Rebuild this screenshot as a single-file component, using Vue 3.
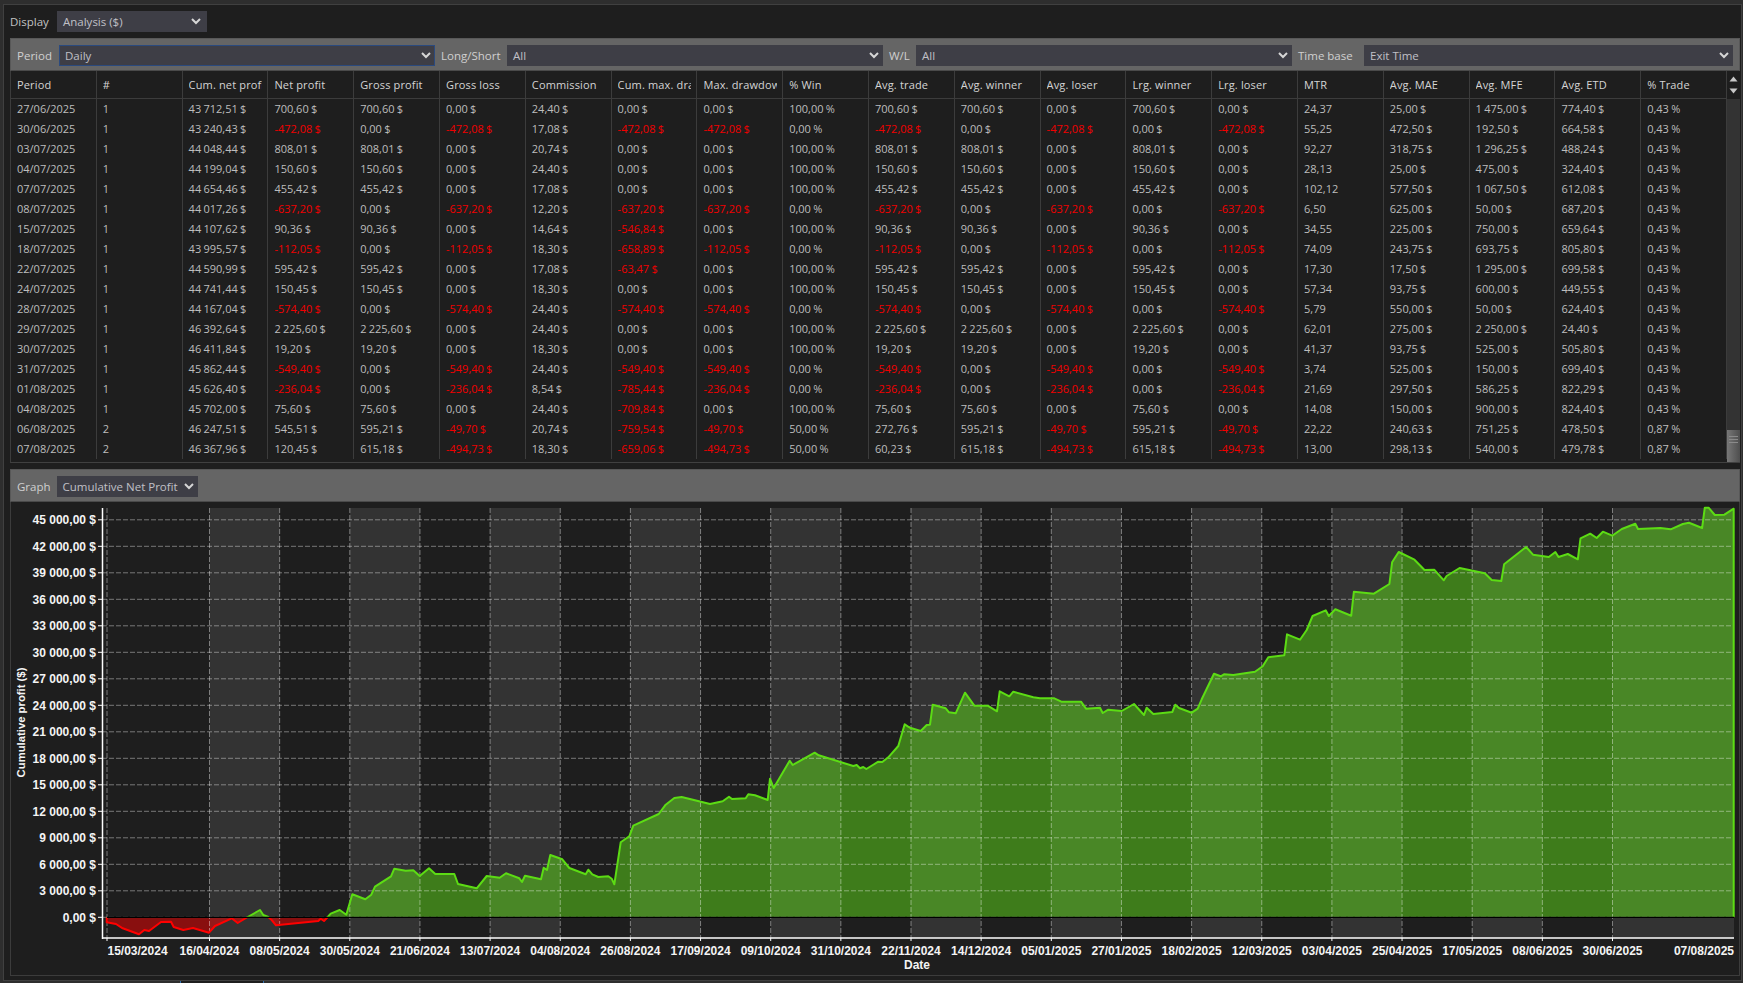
<template>
  <div class="page">
    <div class="frame">
      <div class="display-row">
        <span class="lbl display-lbl">Display</span>
        <div class="select display-select">
          <span>Analysis ($)</span>
          <svg class="chev" width="10" height="7" viewBox="0 0 10 7"><path d="M1 1 L5 5 L9 1" /></svg>
        </div>
      </div>

      <div class="toolbar filters">
        <span class="lbl">Period</span>
        <div class="select focused">
          <span>Daily</span>
          <svg class="chev" width="10" height="7" viewBox="0 0 10 7"><path d="M1 1 L5 5 L9 1" /></svg>
        </div>
        <span class="lbl">Long/Short</span>
        <div class="select">
          <span>All</span>
          <svg class="chev" width="10" height="7" viewBox="0 0 10 7"><path d="M1 1 L5 5 L9 1" /></svg>
        </div>
        <span class="lbl">W/L</span>
        <div class="select">
          <span>All</span>
          <svg class="chev" width="10" height="7" viewBox="0 0 10 7"><path d="M1 1 L5 5 L9 1" /></svg>
        </div>
        <span class="lbl">Time base</span>
        <div class="select">
          <span>Exit Time</span>
          <svg class="chev" width="10" height="7" viewBox="0 0 10 7"><path d="M1 1 L5 5 L9 1" /></svg>
        </div>
      </div>

      <div class="table-wrap">
        <div class="table">
          <div class="row head">
            <div v-for="c in columns" :key="c" class="cell">
              <div class="clip">{{ c }}</div>
            </div>
          </div>
          <div v-for="(r, i) in rows" :key="i" class="row">
            <div
              v-for="(v, j) in r"
              :key="j"
              class="cell"
              :class="{ neg: v.startsWith('-') }"
            >{{ v }}</div>
          </div>
        </div>
        <div class="scrollbar">
          <div class="scroll-btns">
            <svg width="9" height="6" viewBox="0 0 9 6"><path d="M4.5 0.5 L8.5 5.5 L0.5 5.5 Z" /></svg>
            <svg width="9" height="6" viewBox="0 0 9 6"><path d="M0.5 0.5 L8.5 0.5 L4.5 5.5 Z" /></svg>
          </div>
          <div class="track">
            <div class="thumb"><i></i><i></i><i></i></div>
          </div>
        </div>
      </div>

      <div class="toolbar graphbar">
        <span class="lbl">Graph</span>
        <div class="select graph-select">
          <span>Cumulative Net Profit</span>
          <svg class="chev" width="10" height="7" viewBox="0 0 10 7"><path d="M1 1 L5 5 L9 1" /></svg>
        </div>
      </div>

      <div class="chart">
        <!-- viewBox keeps the screen coordinates of the plot -->
        <svg class="plot" viewBox="11 502 1728 472" width="1728" height="472">
          <defs>
            <clipPath id="above"><rect x="100" y="500" width="1640" :height="zeroY - 500" /></clipPath>
            <clipPath id="below"><rect x="100" :y="zeroY" width="1640" height="60" /></clipPath>
          </defs>

          <rect
            v-for="b in bands"
            :key="b.x"
            class="band"
            :x="b.x"
            y="508"
            :width="b.w"
            height="430"
          />

          <path class="area-green" clip-path="url(#above)" :d="areaPath" />
          <path class="area-red" clip-path="url(#below)" :d="areaPath" />

          <line
            v-for="y in yTicks"
            :key="y.label"
            class="grid"
            x1="102"
            x2="1734"
            :y1="y.y"
            :y2="y.y"
          />
          <line
            v-for="x in gridX"
            :key="x"
            class="grid"
            :x1="x"
            :x2="x"
            y1="508"
            y2="938"
          />

          <path class="line-green" clip-path="url(#above)" :d="linePath" />
          <path class="line-red" clip-path="url(#below)" :d="linePath" />
          <line class="zero" x1="107" x2="1734" :y1="zeroY" :y2="zeroY" />

          <line class="axis" x1="102.5" x2="102.5" y1="508" y2="939" />
          <line class="axis" x1="102" x2="1734" y1="938" y2="938" />
          <line
            v-for="y in yTicks"
            :key="'t' + y.label"
            class="tick"
            x1="98"
            x2="102"
            :y1="y.y"
            :y2="y.y"
          />
          <line
            v-for="x in gridX"
            :key="'t' + x"
            class="tick"
            :x1="x"
            :x2="x"
            y1="938"
            y2="941"
          />

          <text
            v-for="y in yTicks"
            :key="'l' + y.label"
            class="axis-text"
            x="96"
            :y="y.y + 4.5"
            text-anchor="end"
          >{{ y.label }}</text>
          <text
            v-for="d in dates"
            :key="d.label"
            class="axis-text"
            :x="d.x"
            y="955"
            :text-anchor="d.anchor"
          >{{ d.label }}</text>
          <text class="axis-text" x="917" y="969" text-anchor="middle">Date</text>
          <text
            class="axis-text axis-title"
            transform="translate(25 722.5) rotate(-90)"
            text-anchor="middle"
          >Cumulative profit ($)</text>
        </svg>
      </div>
    </div>
    <div class="tab-edge"></div>
  </div>
</template>

<script setup>
import { computed } from 'vue'

const columns = [
  'Period', '#', 'Cum. net profit', 'Net profit', 'Gross profit', 'Gross loss', 'Commission',
  'Cum. max. drawdown', 'Max. drawdown', '% Win', 'Avg. trade', 'Avg. winner', 'Avg. loser',
  'Lrg. winner', 'Lrg. loser', 'MTR', 'Avg. MAE', 'Avg. MFE', 'Avg. ETD', '% Trade'
]

const raw = [
  '27/06/2025|1|43 712,51|700,60|700,60|0,00|24,40|0,00|0,00|100,00|700,60|700,60|0,00|700,60|0,00|24,37|25,00|1 475,00|774,40|0,43',
  '30/06/2025|1|43 240,43|-472,08|0,00|-472,08|17,08|-472,08|-472,08|0,00|-472,08|0,00|-472,08|0,00|-472,08|55,25|472,50|192,50|664,58|0,43',
  '03/07/2025|1|44 048,44|808,01|808,01|0,00|20,74|0,00|0,00|100,00|808,01|808,01|0,00|808,01|0,00|92,27|318,75|1 296,25|488,24|0,43',
  '04/07/2025|1|44 199,04|150,60|150,60|0,00|24,40|0,00|0,00|100,00|150,60|150,60|0,00|150,60|0,00|28,13|25,00|475,00|324,40|0,43',
  '07/07/2025|1|44 654,46|455,42|455,42|0,00|17,08|0,00|0,00|100,00|455,42|455,42|0,00|455,42|0,00|102,12|577,50|1 067,50|612,08|0,43',
  '08/07/2025|1|44 017,26|-637,20|0,00|-637,20|12,20|-637,20|-637,20|0,00|-637,20|0,00|-637,20|0,00|-637,20|6,50|625,00|50,00|687,20|0,43',
  '15/07/2025|1|44 107,62|90,36|90,36|0,00|14,64|-546,84|0,00|100,00|90,36|90,36|0,00|90,36|0,00|34,55|225,00|750,00|659,64|0,43',
  '18/07/2025|1|43 995,57|-112,05|0,00|-112,05|18,30|-658,89|-112,05|0,00|-112,05|0,00|-112,05|0,00|-112,05|74,09|243,75|693,75|805,80|0,43',
  '22/07/2025|1|44 590,99|595,42|595,42|0,00|17,08|-63,47|0,00|100,00|595,42|595,42|0,00|595,42|0,00|17,30|17,50|1 295,00|699,58|0,43',
  '24/07/2025|1|44 741,44|150,45|150,45|0,00|18,30|0,00|0,00|100,00|150,45|150,45|0,00|150,45|0,00|57,34|93,75|600,00|449,55|0,43',
  '28/07/2025|1|44 167,04|-574,40|0,00|-574,40|24,40|-574,40|-574,40|0,00|-574,40|0,00|-574,40|0,00|-574,40|5,79|550,00|50,00|624,40|0,43',
  '29/07/2025|1|46 392,64|2 225,60|2 225,60|0,00|24,40|0,00|0,00|100,00|2 225,60|2 225,60|0,00|2 225,60|0,00|62,01|275,00|2 250,00|24,40|0,43',
  '30/07/2025|1|46 411,84|19,20|19,20|0,00|18,30|0,00|0,00|100,00|19,20|19,20|0,00|19,20|0,00|41,37|93,75|525,00|505,80|0,43',
  '31/07/2025|1|45 862,44|-549,40|0,00|-549,40|24,40|-549,40|-549,40|0,00|-549,40|0,00|-549,40|0,00|-549,40|3,74|525,00|150,00|699,40|0,43',
  '01/08/2025|1|45 626,40|-236,04|0,00|-236,04|8,54|-785,44|-236,04|0,00|-236,04|0,00|-236,04|0,00|-236,04|21,69|297,50|586,25|822,29|0,43',
  '04/08/2025|1|45 702,00|75,60|75,60|0,00|24,40|-709,84|0,00|100,00|75,60|75,60|0,00|75,60|0,00|14,08|150,00|900,00|824,40|0,43',
  '06/08/2025|2|46 247,51|545,51|595,21|-49,70|20,74|-759,54|-49,70|50,00|272,76|595,21|-49,70|595,21|-49,70|22,22|240,63|751,25|478,50|0,87',
  '07/08/2025|2|46 367,96|120,45|615,18|-494,73|18,30|-659,06|-494,73|50,00|60,23|615,18|-494,73|615,18|-494,73|13,00|298,13|540,00|479,78|0,87'
]

// columns 0, 1 and 15 have no unit, 9 and 19 are percentages, the rest dollars
const rows = raw.map((line) =>
  line.split('|').map((v, j) => {
    if (j === 0 || j === 1 || j === 15) return v
    return v + (j === 9 || j === 19 ? ' %' : ' $')
  })
)

// chart
const zeroY = 917.3
const stepY = 26.5

const yTicks = Array.from({ length: 16 }, (_, i) => {
  const value = i * 3000
  const label = i === 0 ? '0,00 $' : `${value / 1000} 000,00 $`
  return { y: zeroY - i * stepY, label }
})

const midX = Array.from({ length: 21 }, (_, n) => 209.5 + n * 70.15)
const gridX = [107, ...midX]

const bands = midX
  .map((x, n) => ({ x, w: (n === 20 ? 1734 : x + 70.15) - x, n }))
  .filter((b) => b.n % 2 === 0)

const dateLabels = [
  '15/03/2024', '16/04/2024', '08/05/2024', '30/05/2024', '21/06/2024', '13/07/2024',
  '04/08/2024', '26/08/2024', '17/09/2024', '09/10/2024', '31/10/2024', '22/11/2024',
  '14/12/2024', '05/01/2025', '27/01/2025', '18/02/2025', '12/03/2025', '03/04/2025',
  '25/04/2025', '17/05/2025', '08/06/2025', '30/06/2025'
]
const dates = [
  ...dateLabels.map((label, i) => ({
    label,
    x: i === 0 ? 107.5 : gridX[i],
    anchor: i === 0 ? 'start' : 'middle'
  })),
  { label: '07/08/2025', x: 1734, anchor: 'end' }
]

// curve points, read off in pieces: [origin x, origin y, x scale, points]
const pieces = [
  [100, 780, 3, [
    [20, 412], [20, 427], [48, 432], [68, 445], [117, 463], [133, 450], [147, 453], [183, 426],
    [213, 425], [221, 441], [250, 450], [279, 444], [327, 458], [345, 438], [395, 415], [413, 429],
    [443, 411], [480, 390], [490, 405], [505, 411], [515, 420], [528, 436], [655, 423], [662, 416],
    [672, 423], [684, 410], [692, 401], [719, 390], [739, 404], [757, 343], [796, 358], [814, 344],
    [825, 320], [873, 289], [883, 266], [917, 272], [940, 271], [959, 288], [987, 265], [1006, 282],
    [1063, 282], [1074, 312], [1130, 325], [1160, 288], [1199, 293], [1218, 280], [1258, 295]
  ]],
  [500, 700, 3, [
    [66, 546], [75, 527], [123, 538], [131, 503], [141, 510], [151, 465], [187, 478], [208, 504],
    [257, 523], [265, 509], [277, 523], [295, 531], [325, 529], [335, 536], [343, 553], [362, 427],
    [388, 409], [400, 377], [476, 342], [497, 314], [523, 294], [545, 291], [630, 312], [668, 304],
    [687, 290], [696, 297], [737, 295], [745, 283], [765, 286], [803, 300], [810, 236], [821, 264],
    [869, 182], [878, 195], [944, 158], [956, 166], [1060, 198], [1070, 195], [1080, 205], [1090, 201],
    [1099, 207], [1135, 185], [1147, 186], [1165, 172], [1195, 138], [1214, 73]
  ]],
  [900, 630, 3, [
    [23, 289], [30, 293], [62, 303], [80, 285], [90, 284], [98, 224], [137, 235], [147, 247], [167, 250],
    [195, 188], [223, 227], [263, 227], [291, 244], [299, 184], [328, 199], [340, 185], [400, 202],
    [420, 205], [463, 205], [484, 215], [543, 215], [558, 236], [600, 233], [608, 249], [625, 239],
    [665, 243], [702, 222], [732, 255], [740, 233], [760, 252], [817, 246], [826, 224], [837, 234],
    [875, 248], [893, 236], [905, 208], [942, 131], [962, 139], [972, 133], [1000, 135], [1065, 125],
    [1088, 109], [1105, 82], [1153, 76], [1161, 13], [1200, 29]
  ]],
  [1200, 505, 2.904, [
    [310, 375], [327, 333], [365, 316], [374, 333], [393, 313], [439, 332], [447, 260], [505, 266],
    [550, 237], [558, 172], [577, 141], [623, 164], [652, 195], [680, 194], [708, 226], [716, 213],
    [754, 189], [827, 205], [847, 225], [875, 228], [883, 178], [947, 126], [967, 149], [1013, 156],
    [1032, 141], [1041, 156], [1068, 147], [1097, 163], [1105, 100], [1133, 86], [1152, 99], [1170, 80],
    [1197, 92], [1225, 72], [1264, 56], [1272, 72], [1337, 69], [1367, 73], [1402, 57], [1420, 53],
    [1458, 69], [1466, 8], [1477, 8], [1495, 30], [1523, 29], [1542, 16], [1550, 11]
  ]]
]

const points = pieces.flatMap(([ox, oy, sx, pts]) =>
  pts.map(([x, y]) => [+(ox + x / sx).toFixed(1), +(oy + y / 3).toFixed(1)])
)

const linePath = computed(() => {
  const body = points.map(([x, y], i) => `${i ? 'L' : 'M'}${x} ${y}`).join(' ')
  return `${body} L1733.7 ${zeroY}`
})
const areaPath = computed(() => `${linePath.value} L106.7 ${zeroY} Z`)
</script>

<style scoped>
.page{
  width: 1743px;
  height: 983px;
  padding: 4px 1px 2px 3px;
  box-sizing: border-box;
  background: #2e2e2e;
  position: relative;
  overflow: hidden;
  font-family: "Open Sans", "Noto Sans", sans-serif;
  font-size: 11px;
  word-spacing: -0.6px;
  color: #bdbdbd;
}
.frame{
  height: 100%;
  box-sizing: border-box;
  background: #1e1e1e;
  border: 1px solid #404040;
  padding: 6px 1px 4px 6px;
  display: flex;
  flex-direction: column;
}

.display-row{
  display: flex;
  align-items: center;
  gap: 5px;
  height: 21px;
  margin-bottom: 6px;
}
.lbl{
  white-space: nowrap;
  color: #c2c2c2;
  font-size: 11.5px;
  word-spacing: 0;
}
.display-lbl{ width: 42px; }
.select{
  height: 21px;
  box-sizing: border-box;
  background: #3e3e46;
  color: #c0c0c6;
  display: flex;
  align-items: center;
  justify-content: space-between;
  padding: 0 4px 0 6px;
  font-size: 11.5px;
  word-spacing: 0;
  white-space: nowrap;
}
.select.focused{
  border: 1px solid #2b4a7e;
  padding-left: 5px;
  padding-right: 3px;
}
.display-select{ width: 150px; padding-right: 6px; }
.graph-select{ width: 141px; }
.chev{ flex: none; }
.chev path{
  fill: none;
  stroke: #d6d6d6;
  stroke-width: 2;
}

.toolbar{
  height: 33px;
  box-sizing: border-box;
  background: #656565;
  border: 1px solid #585858;
  border-bottom-color: #4a4a4a;
  padding: 6px 6px 4px 6px;
}
.toolbar .lbl{ color: #d0d0d0; }
.filters{
  display: grid;
  grid-template-columns: 36px 376px 60px 376px 21px 376px 60px 1fr;
  column-gap: 6px;
  align-items: center;
}
.graphbar{
  display: flex;
  align-items: center;
  gap: 6px;
}

.table-wrap{
  display: flex;
  height: 392px;
  box-sizing: border-box;
  border-left: 1px solid #3c3c3c;
  border-bottom: 1px solid #404040;
  margin-bottom: 6px;
}
.table{
  width: 1716px;
  flex: none;
}
.row{
  display: grid;
  grid-template-columns: repeat(20, 1fr);
  height: 20px;
}
.row.head{
  height: 28px;
  border-bottom: 1px solid #3c3c3c;
  box-sizing: border-box;
  color: #d4d4d4;
  letter-spacing: .15px;
  word-spacing: 0;
}
.cell{
  padding-left: 6px;
  line-height: 20px;
  white-space: nowrap;
  overflow: hidden;
  border-right: 1px solid #3c3c3c;
}
.head .cell{
  line-height: 27px;
  padding-right: 5px;
}
.clip{ overflow: hidden; }
.neg{ color: #f00000; }

.scrollbar{
  flex: 1;
  display: flex;
  flex-direction: column;
  background: #333;
}
.scroll-btns{
  height: 28px;
  background: #1e1e1e;
  display: flex;
  flex-direction: column;
  align-items: center;
  justify-content: center;
  gap: 6px;
}
.scroll-btns path{ fill: #c8c8c8; }
.track{
  flex: 1;
  display: flex;
  align-items: flex-end;
}
.thumb{
  width: 100%;
  height: 32px;
  background: linear-gradient(90deg, #777, #4e4e4e);
  display: flex;
  flex-direction: column;
  gap: 2px;
  padding: 6px 2px;
  box-sizing: border-box;
}
.thumb i{
  display: block;
  height: 1px;
  background: #8a8a8a;
}

.chart{
  flex: 1;
  min-height: 0;
  border: 1px solid #3c3c3c;
  border-top: 0;
  overflow: hidden;
}
.plot{ display: block; }
.band{ fill: #333; }
.area-green{ fill: #63e41a; fill-opacity: .48; }
.area-red{ fill: #ff0000; fill-opacity: .48; }
.grid{
  stroke: #fff;
  stroke-opacity: .4;
  stroke-width: 1;
  stroke-dasharray: 5 2;
}
.line-green, .line-red{
  fill: none;
  stroke-width: 2;
  stroke-linejoin: round;
}
.line-green{ stroke: #5cdc14; }
.line-red{ stroke: #ff0000; }
.zero{ stroke: #000; stroke-width: 1.2; }
.axis{ stroke: #fff; stroke-width: 1.5; }
.tick{ stroke: #fff; stroke-width: 1; }
.axis-text{
  font-family: "Liberation Sans", Arial, sans-serif;
  font-weight: 700;
  font-size: 12px;
  word-spacing: 0;
  fill: #f4f4f4;
}
.axis-title{ font-size: 11.3px; }

.tab-edge{
  position: absolute;
  left: 180px;
  bottom: 0;
  width: 84px;
  height: 2px;
  box-sizing: border-box;
  border-left: 1px solid #2f6fb0;
  border-right: 1px solid #2f6fb0;
  background: #1e1e1e;
}
</style>

<style>
html, body{
  margin: 0;
  background: #2e2e2e;
}
</style>
